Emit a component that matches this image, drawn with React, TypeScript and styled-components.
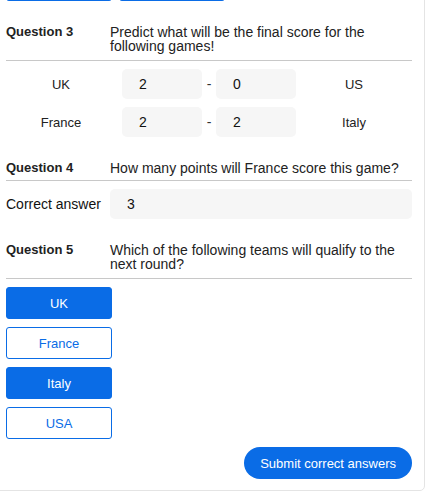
import React from "react";
import styled, { createGlobalStyle, css } from "styled-components";

const Global = createGlobalStyle`
  html, body { margin: 0; padding: 0; background: #ffffff; }
  body { font-family: "Liberation Sans", Arial, sans-serif; color: #1d1d1f; overflow: hidden; }
  * { box-sizing: border-box; }
`;

const BLUE = "#0a6ce6";

const Card = styled.div`
  margin: -43px 0 0 -7px;
  width: 432px;
  border: 1px solid #e4e4e4;
  border-radius: 5px;
  padding: 11px 12px 11px 12px;
  display: flex;
  flex-direction: column;
`;

const ButtonRow = styled.div`
  display: flex;
  gap: 7px;
`;

const Section = styled.section`
  margin-top: 24px;
  display: flex;
  flex-direction: column;
`;

const Header = styled.div<{ $pad: number }>`
  display: flex;
  align-items: flex-start;
  padding-bottom: ${(p) => p.$pad}px;
  border-bottom: 1px solid #c8c8c8;
  margin-bottom: 8px;
`;

const Label = styled.div`
  width: 104px;
  flex: none;
  font-weight: 700;
  font-size: 13px;
  line-height: 14px;
  color: #222;
`;

const Prompt = styled.div`
  flex: 1;
  font-size: 14px;
  line-height: 14px;
  color: #222;
`;

const ScoreList = styled.div`
  display: flex;
  flex-direction: column;
  gap: 8px;
`;

const ScoreRow = styled.div`
  display: flex;
  align-items: center;
  height: 30px;
`;

const Team = styled.div<{ $side: "left" | "right" }>`
  font-size: 13px;
  color: #222;
  text-align: center;
  ${(p) =>
    p.$side === "left"
      ? css`
          width: 110px;
          margin-right: 6px;
        `
      : css`
          flex: 1;
        `}
`;

const Field = styled.div<{ $wide?: boolean }>`
  height: 30px;
  border-radius: 5px;
  background: #f6f6f6;
  display: flex;
  align-items: center;
  font-size: 14px;
  color: #111;
  padding-left: 17px;
  ${(p) =>
    p.$wide
      ? css`
          flex: 1;
        `
      : css`
          width: 80px;
        `}
`;

const Dash = styled.div`
  width: 14px;
  text-align: center;
  font-size: 14px;
  color: #333;
`;

const AnswerRow = styled.div`
  display: flex;
  align-items: center;
`;

const AnswerLabel = styled.div`
  width: 104px;
  flex: none;
  font-size: 14px;
  color: #111;
`;

const Choices = styled.div`
  display: flex;
  flex-direction: column;
  gap: 8px;
`;

const Choice = styled.button<{ $selected?: boolean }>`
  width: 106px;
  height: 32px;
  border-radius: 3px;
  border: 1px solid ${BLUE};
  font-family: inherit;
  font-size: 13px;
  padding: 0;
  background: ${(p) => (p.$selected ? BLUE : "#fff")};
  color: ${(p) => (p.$selected ? "#fff" : BLUE)};
`;

const Footer = styled.div`
  display: flex;
  justify-content: flex-end;
  margin-top: 8px;
`;

const Submit = styled.button`
  height: 32px;
  border-radius: 16px;
  border: none;
  background: ${BLUE};
  color: #fff;
  font-family: inherit;
  font-size: 13px;
  padding: 0 16px;
`;

const scores = [
  { home: "UK", a: "2", b: "0", away: "US" },
  { home: "France", a: "2", b: "2", away: "Italy" },
];

const teams = [
  { name: "UK", selected: true },
  { name: "France", selected: false },
  { name: "Italy", selected: true },
  { name: "USA", selected: false },
];

export default function App() {
  return (
    <>
      <Global />
      <Card>
        <ButtonRow>
          <Choice $selected aria-label="previous answer" />
          <Choice $selected aria-label="previous answer" />
        </ButtonRow>

        <Section>
          <Header $pad={7}>
            <Label>Question 3</Label>
            <Prompt>Predict what will be the final score for the following games!</Prompt>
          </Header>
          <ScoreList>
            {scores.map((s) => (
              <ScoreRow key={s.home}>
                <Team $side="left">{s.home}</Team>
                <Field>{s.a}</Field>
                <Dash>-</Dash>
                <Field>{s.b}</Field>
                <Team $side="right">{s.away}</Team>
              </ScoreRow>
            ))}
          </ScoreList>
        </Section>

        <Section>
          <Header $pad={5}>
            <Label>Question 4</Label>
            <Prompt>How many points will France score this game?</Prompt>
          </Header>
          <AnswerRow>
            <AnswerLabel>Correct answer</AnswerLabel>
            <Field $wide>3</Field>
          </AnswerRow>
        </Section>

        <Section>
          <Header $pad={7}>
            <Label>Question 5</Label>
            <Prompt>Which of the following teams will qualify to the next round?</Prompt>
          </Header>
          <Choices>
            {teams.map((t) => (
              <Choice key={t.name} $selected={t.selected}>
                {t.name}
              </Choice>
            ))}
          </Choices>
        </Section>

        <Footer>
          <Submit>Submit correct answers</Submit>
        </Footer>
      </Card>
    </>
  );
}
